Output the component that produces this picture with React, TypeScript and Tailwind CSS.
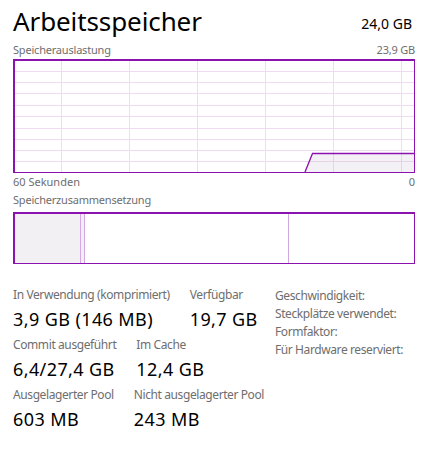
import React from "react";

const PURPLE = "#8b12ae";
const GRID = "#efdcf3";

function UsageGraph() {
  const w = 402;
  const h = 114;
  const vx = [48, 116, 184, 252, 320, 388];
  const hy = [12, 23, 34, 46, 57, 69, 80, 91, 102];
  return (
    <svg width={w} height={h} viewBox={`0 0 ${w} ${h}`} shapeRendering="crispEdges" className="block">
      <rect x={0} y={0} width={w} height={h} fill="#ffffff" />
      {vx.map((x) => (
        <line key={"v" + x} x1={x + 0.5} y1={0} x2={x + 0.5} y2={h} stroke={GRID} strokeWidth={1} />
      ))}
      {hy.map((y) => (
        <line key={"h" + y} x1={0} y1={y + 0.5} x2={w} y2={y + 0.5} stroke={GRID} strokeWidth={1} />
      ))}
      <polygon points={`292,${h - 1} 299.5,94.5 ${w - 1},94.5 ${w - 1},${h - 1}`} fill="#f2eff4" fillOpacity={0.85} />
      {vx.map((x) => (x > 292 ? <line key={"vv" + x} x1={x + 0.5} y1={95} x2={x + 0.5} y2={h} stroke="#e6d3ea" strokeWidth={1} /> : null))}
      {hy.map((y) => (y > 94 ? <line key={"hh" + y} x1={292} y1={y + 0.5} x2={w} y2={y + 0.5} stroke="#e6d3ea" strokeWidth={1} /> : null))}
      <polyline points={`292,${h - 1} 299.5,94.5 ${w - 1},94.5`} fill="none" stroke={PURPLE} strokeWidth={1.3} shapeRendering="auto" />
      <rect x={0.75} y={0.75} width={w - 1.5} height={h - 1.5} fill="none" stroke={PURPLE} strokeWidth={1.5} />
    </svg>
  );
}

function CompositionBar() {
  const w = 402;
  const h = 52;
  return (
    <svg width={w} height={h} viewBox={`0 0 ${w} ${h}`} shapeRendering="crispEdges" className="block">
      <rect x={0} y={0} width={w} height={h} fill="#ffffff" />
      <rect x={0} y={0} width={67} height={h} fill="#f3f0f4" />
      <rect x={67} y={0} width={4} height={h} fill="#f3eef5" />
      <line x1={67.5} y1={0} x2={67.5} y2={h} stroke="#d2a8e0" strokeWidth={1} />
      <line x1={71.5} y1={0} x2={71.5} y2={h} stroke="#d2a8e0" strokeWidth={1} />
      <line x1={275.5} y1={0} x2={275.5} y2={h} stroke="#d2a8e0" strokeWidth={1} />
      <rect x={0.75} y={0.75} width={w - 1.5} height={h - 1.5} fill="none" stroke={PURPLE} strokeWidth={1.5} />
    </svg>
  );
}

function Stat({ label, value }: { label: string; value: string }) {
  return (
    <div className="flex flex-col">
      <span className="text-[12px] leading-[16px] text-[#6e6e6e] whitespace-nowrap tracking-[-0.4px]">{label}</span>
      <span className="text-[18px] leading-[26px] text-black whitespace-nowrap mt-[3px] tracking-[0.4px]">{value}</span>
    </div>
  );
}

export default function App() {
  return (
    <div
      className="w-[432px] h-[460px] bg-white pl-[13px] pr-[17px] overflow-hidden"
      style={{ fontFamily: '"Noto Sans", "Open Sans", sans-serif' }}
    >
      <div className="flex items-end justify-between h-[38px]">
        <span className="text-[26px] leading-[34px] text-black tracking-[-0.1px]">Arbeitsspeicher</span>
        <span className="text-[14px] leading-[20px] text-black mb-[4px] mr-[3px]">24,0 GB</span>
      </div>
      <div className="flex justify-between text-[11px] leading-[16px] text-[#6e6e6e] mt-[4px] tracking-[-0.2px]">
        <span>Speicherauslastung</span>
        <span>23,9 GB</span>
      </div>
      <div className="mt-[1px]">
        <UsageGraph />
      </div>
      <div className="flex justify-between text-[11px] leading-[16px] text-[#6e6e6e] mt-[1px] w-[402px]">
        <span>60 Sekunden</span>
        <span>0</span>
      </div>
      <div className="text-[11px] leading-[16px] text-[#6e6e6e] mt-[2px] tracking-[-0.2px]">Speicherzusammensetzung</div>
      <div className="mt-[4px]">
        <CompositionBar />
      </div>
      <div className="flex mt-[23px]">
        <div className="flex flex-col w-[262px]">
          <div className="flex gap-5">
            <Stat label="In Verwendung (komprimiert)" value="3,9 GB (146 MB)" />
            <Stat label="Verfügbar" value="19,7 GB" />
          </div>
          <div className="flex gap-5 mt-[5px]">
            <Stat label="Commit ausgeführt" value="6,4/27,4 GB" />
            <Stat label="Im Cache" value="12,4 GB" />
          </div>
          <div className="flex gap-5 mt-[5px]">
            <Stat label="Ausgelagerter Pool" value="603 MB" />
            <Stat label="Nicht ausgelagerter Pool" value="243 MB" />
          </div>
        </div>
        <div className="flex flex-col text-[12px] leading-[18px] text-[#6e6e6e] tracking-[-0.4px]">
          <span>Geschwindigkeit:</span>
          <span>Steckplätze verwendet:</span>
          <span>Formfaktor:</span>
          <span>Für Hardware reserviert:</span>
        </div>
      </div>
    </div>
  );
}
